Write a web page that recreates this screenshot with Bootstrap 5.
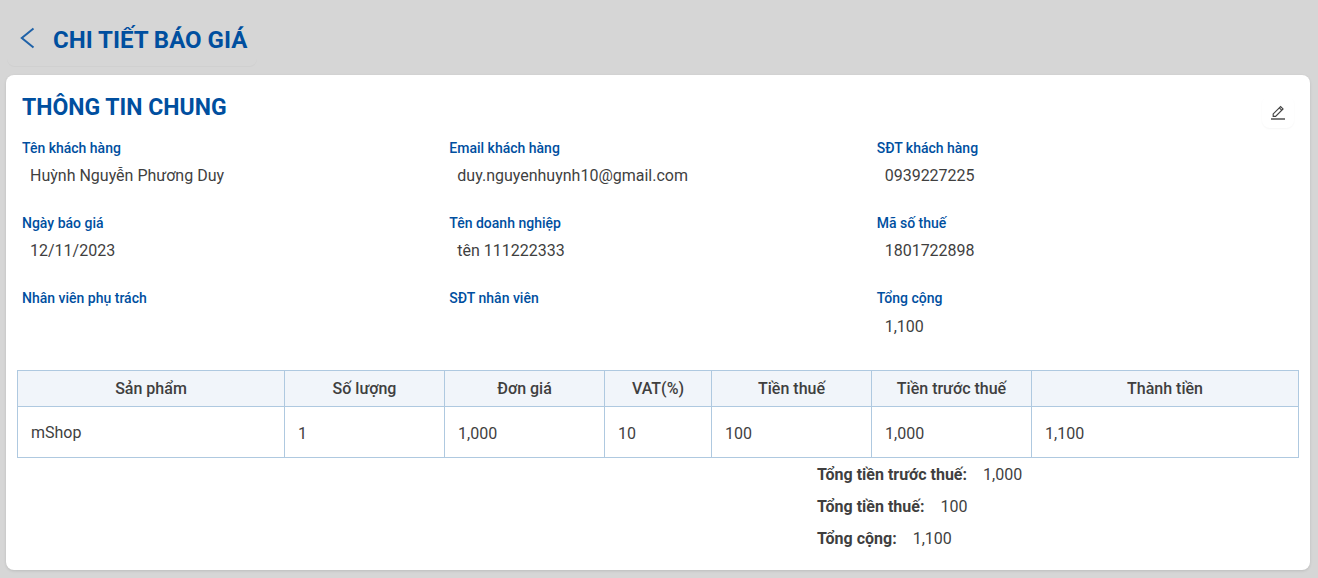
<!DOCTYPE html>
<html lang="vi">
<head>
<meta charset="utf-8">
<title>Chi tiết báo giá</title>
<link href="https://cdn.jsdelivr.net/npm/bootstrap@5.3.0/dist/css/bootstrap.min.css" rel="stylesheet">
<style>
html,body{height:100%;overflow:hidden}
body{background:#d6d6d6;font-family:Roboto,"Liberation Sans",sans-serif;color:#3f3f3f;font-size:16px}
.page-head{width:250px;height:66px;margin-left:7px;padding:12px 0 0 11px;border-radius:0 0 8px 8px;box-shadow:0 1px 1px rgba(0,0,0,.03)}
.back-btn{width:35px;padding:0;border:0;background:none;line-height:0;text-align:left}
.head-title{font-size:24px;font-weight:700;color:#004f9f;margin:0;line-height:28px;padding-top:1px}
.sheet{margin:9px 8px 0 6px;height:495px;background:#fff;border-radius:8px;box-shadow:0 1px 3px rgba(0,0,0,.12);position:relative}
.sheet-top{height:57px;padding:19px 16px 0 16px}
.sheet-title{font-size:23px;font-weight:700;color:#004f9f;margin:0;line-height:28px}
.edit-btn{width:32px;height:32px;margin-top:2px;padding:0;border:0;background:none;border-radius:8px;box-shadow:0 1px 2px rgba(0,0,0,.04);line-height:0}
.field-grid{padding-left:16px;width:1298px}
.field{height:75px}
.field-label{font-size:14px;font-weight:500;color:#004f9f;line-height:16px;padding-top:8px}
.field-value{font-size:16px;line-height:19px;padding:10px 0 0 8px;color:#3f3f3f}
.field-value.is-total{padding-top:11px}
.quote-wrap{padding:13px 11px 0 11px}
.quote-table{table-layout:fixed;width:1281px;margin:0;border-collapse:collapse}
.quote-table th,.quote-table td{border:1px solid #afc9e0;color:#3f3f3f;box-shadow:none;background:#fff;padding:0 13px;font-size:16px;vertical-align:middle}
.quote-table th{background:#f1f5fa;font-weight:500;text-align:center;height:36px;padding:0;line-height:19px}
.quote-table td{height:51px;line-height:19px;padding-top:2px}
.quote-table td.name-cell{padding-top:0}
.sum-list{margin-left:811px;padding-top:7px}
.sum-row{height:32px;line-height:19px;gap:16px}
.sum-row b{font-weight:700}
</style>
</head>
<body>
<div class="page-head d-flex align-items-center">
  <button class="back-btn" type="button" aria-label="Quay lại">
    <svg width="20" height="24" viewBox="0 0 20 24" fill="none"><path d="M15.5 1.5 3.8 11 15.5 20.5" stroke="#1f62a8" stroke-width="2"/></svg>
  </button>
  <h1 class="head-title">CHI TIẾT BÁO GIÁ</h1>
</div>
<main class="sheet">
  <div class="sheet-top d-flex justify-content-between align-items-start">
    <h2 class="sheet-title">THÔNG TIN CHUNG</h2>
    <button class="edit-btn" type="button" aria-label="Sửa">
      <svg width="16" height="16" viewBox="0 0 16 16" fill="none"><path d="M1 15h14" stroke="#333" stroke-width="1.3"/><path d="M3.2 12.3v-2.4L10.6 2.5l2.4 2.4-7.4 7.4H3.2Z" stroke="#444" stroke-width="1.2"/><path d="M9.3 3.8l2.4 2.4" stroke="#444" stroke-width="1.1"/></svg>
    </button>
  </div>
  <div class="field-grid row g-0">
    <div class="col-4 field"><div class="field-label">Tên khách hàng</div><div class="field-value">Huỳnh Nguyễn Phương Duy</div></div>
    <div class="col-4 field"><div class="field-label">Email khách hàng</div><div class="field-value">duy.nguyenhuynh10@gmail.com</div></div>
    <div class="col-4 field"><div class="field-label">SĐT khách hàng</div><div class="field-value">0939227225</div></div>
    <div class="col-4 field"><div class="field-label">Ngày báo giá</div><div class="field-value">12/11/2023</div></div>
    <div class="col-4 field"><div class="field-label">Tên doanh nghiệp</div><div class="field-value">tên 111222333</div></div>
    <div class="col-4 field"><div class="field-label">Mã số thuế</div><div class="field-value">1801722898</div></div>
    <div class="col-4 field"><div class="field-label">Nhân viên phụ trách</div><div class="field-value"></div></div>
    <div class="col-4 field"><div class="field-label">SĐT nhân viên</div><div class="field-value"></div></div>
    <div class="col-4 field"><div class="field-label">Tổng cộng</div><div class="field-value is-total">1,100</div></div>
  </div>
  <div class="quote-wrap">
    <table class="table quote-table">
      <colgroup><col style="width:267px"><col style="width:160px"><col style="width:160px"><col style="width:107px"><col style="width:160px"><col style="width:160px"><col style="width:267px"></colgroup>
      <thead><tr><th>Sản phẩm</th><th>Số lượng</th><th>Đơn giá</th><th>VAT(%)</th><th>Tiền thuế</th><th>Tiền trước thuế</th><th>Thành tiền</th></tr></thead>
      <tbody><tr><td class="name-cell">mShop</td><td>1</td><td>1,000</td><td>10</td><td>100</td><td>1,000</td><td>1,100</td></tr></tbody>
    </table>
  </div>
  <div class="sum-list">
    <div class="sum-row d-flex"><b>Tổng tiền trước thuế:</b><span>1,000</span></div>
    <div class="sum-row d-flex"><b>Tổng tiền thuế:</b><span>100</span></div>
    <div class="sum-row d-flex"><b>Tổng cộng:</b><span>1,100</span></div>
  </div>
</main>
</body>
</html>
